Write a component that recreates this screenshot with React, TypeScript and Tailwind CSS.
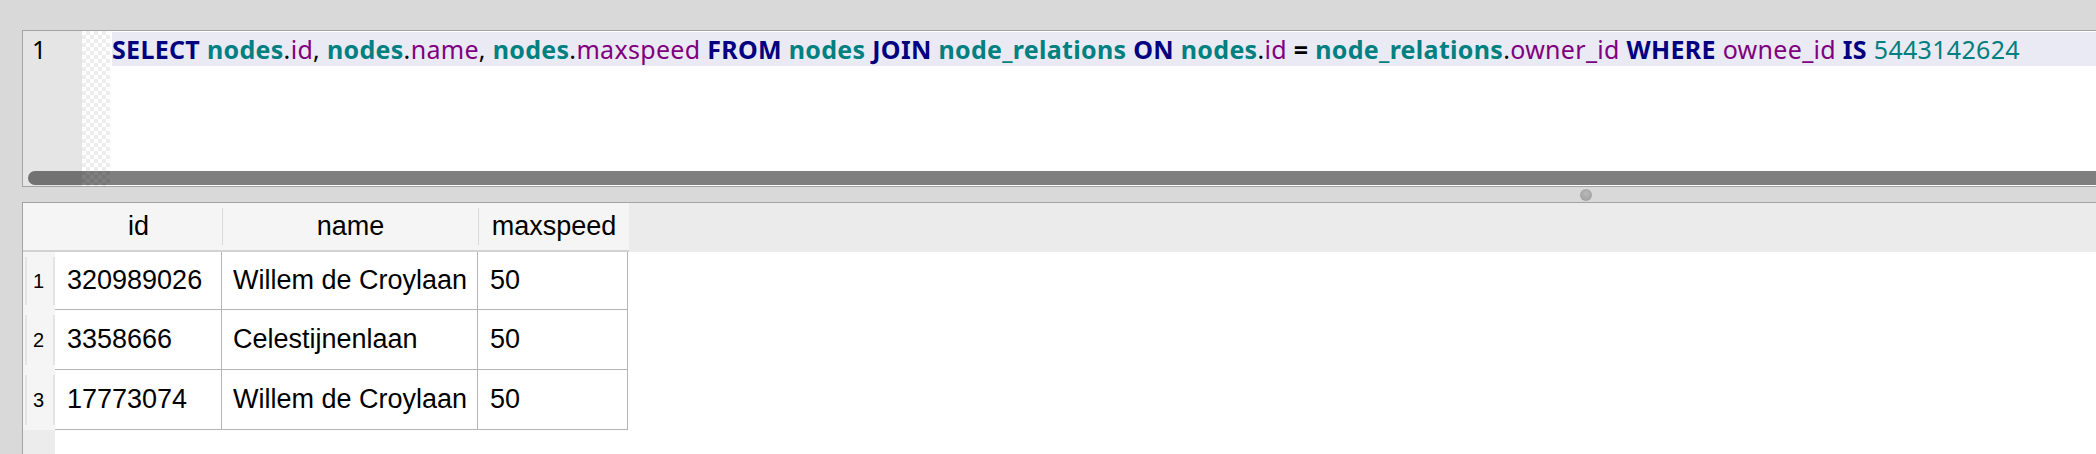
import React from "react";

const KW = "font-bold text-[#000080]";
const TB = "font-bold text-[#008080]";
const COL = "text-[#800080]";
const NUM = "text-[#008080]";
const PUN = "text-black";

const tokens: [string, string][] = [
  ["SELECT", KW], [" ", PUN],
  ["nodes", TB], [".", PUN], ["id", COL], [", ", PUN],
  ["nodes", TB], [".", PUN], ["name", COL], [", ", PUN],
  ["nodes", TB], [".", PUN], ["maxspeed", COL], [" ", PUN],
  ["FROM", KW], [" ", PUN], ["nodes", TB], [" ", PUN],
  ["JOIN", KW], [" ", PUN], ["node_relations", TB], [" ", PUN],
  ["ON", KW], [" ", PUN], ["nodes", TB], [".", PUN], ["id", COL], [" ", PUN],
  ["=", "font-bold text-black"], [" ", PUN],
  ["node_relations", TB], [".", PUN], ["owner_id", COL], [" ", PUN],
  ["WHERE", KW], [" ", PUN], ["ownee_id", COL], [" ", PUN],
  ["IS", KW], [" ", PUN], ["5443142624", NUM],
];

const rows = [
  { n: "1", id: "320989026", name: "Willem de Croylaan", speed: "50", h: "h-[58px]" },
  { n: "2", id: "3358666", name: "Celestijnenlaan", speed: "50", h: "h-[60px]" },
  { n: "3", id: "17773074", name: "Willem de Croylaan", speed: "50", h: "h-[60px]" },
];

export default function App() {
  return (
    <div className="w-[2096px] h-[454px] overflow-hidden bg-[#d9d9d9] pt-[30px] pl-[22px] flex flex-col">
      {/* Editor */}
      <div className="relative h-[157px] shrink-0 border border-r-0 border-[#a3a3a3] bg-white flex">
        <div className="relative z-10 w-[59px] bg-[rgba(0,0,0,0.1)] pl-[9px] pt-[1px] h-full">
          <span className="block h-[34px] leading-[34px] text-[25px] text-black font-['Noto_Sans',sans-serif]">1</span>
        </div>
        <div className="relative z-10 w-[28px] h-full bg-[conic-gradient(rgba(0,0,0,0.07)_25%,transparent_0_50%,rgba(0,0,0,0.07)_0_75%,transparent_0)] bg-[length:8px_8px]" />
        <div className="flex-1 pl-[2px] pt-[1px] min-w-0">
          <div className="h-[34px] bg-[#eaeaf4] whitespace-nowrap leading-[34px] text-[25px] tracking-[0.31px] font-['Noto_Sans',sans-serif]">
            {tokens.map((t, i) => (
              <span key={i} className={t[1]}>
                {t[0]}
              </span>
            ))}
          </div>
        </div>
        <div className="absolute left-[5px] right-0 bottom-[1px] h-[14px] rounded-l-full bg-[#7f7f7f]" />
      </div>

      {/* Splitter */}
      <div className="relative h-[15px] shrink-0">
        <div className="absolute left-[1558px] top-[2px] w-[12px] h-[12px] rounded-full bg-[radial-gradient(circle_at_50%_40%,#b8b8b8,#9a9a9a)]" />
      </div>

      {/* Results */}
      <div className="flex-1 border-t border-l border-[#a3a3a3] bg-white flex flex-col font-['Liberation_Sans',Arial,sans-serif] text-black">
        <div className="flex h-[49px] shrink-0">
          <div className="flex h-[49px] bg-[#f5f5f5] border-b-2 border-[#d2d2d2] text-[27px]">
            <div className="w-[32px]" />
            <div className="w-[167px] flex items-center justify-center">id</div>
            <div className="w-px my-[5px] bg-[#dadada]" />
            <div className="w-[255px] flex items-center justify-center">name</div>
            <div className="w-px my-[5px] bg-[#dadada]" />
            <div className="w-[150px] flex items-center justify-center">maxspeed</div>
          </div>
          <div className="flex-1 bg-[#ebebeb]" />
        </div>
        {rows.map((r) => (
          <div key={r.n} className={`flex ${r.h} shrink-0`}>
            <div className="w-[32px] bg-[#f5f5f5] flex py-[5px]">
              <div className="flex-1 ml-[2px] pr-[3px] border-l-2 border-r-2 border-[#e4e4e4] flex items-center justify-center text-[20px]">
                {r.n}
              </div>
            </div>
            <div className="flex border-b border-[#b4b4b4] text-[27px]">
              <div className="w-[167px] border-r border-[#b4b4b4] flex items-center pl-[12px]">{r.id}</div>
              <div className="w-[256px] border-r border-[#b4b4b4] flex items-center pl-[11px]">{r.name}</div>
              <div className="w-[150px] border-r border-[#b4b4b4] flex items-center pl-[12px]">{r.speed}</div>
            </div>
          </div>
        ))}
        <div className="flex-1 flex">
          <div className="w-[32px] bg-[#ececec]" />
        </div>
      </div>
    </div>
  );
}
